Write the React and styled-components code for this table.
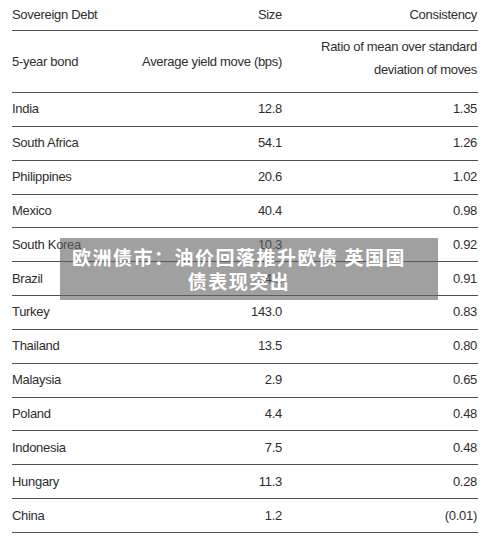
import React from "react";
import styled, { createGlobalStyle } from "styled-components";

const GlobalStyle = createGlobalStyle`
  html, body {
    margin: 0;
    padding: 0;
    background: #fff;
  }
  body {
    font-family: "Liberation Sans", Arial, sans-serif;
    color: #2e2e2e;
  }
`;

const Page = styled.div`
  position: relative;
  width: 500px;
  height: 539px;
  overflow: hidden;
  background: #fff;
`;

const Table = styled.div`
  padding: 0 22px 0 12px;
  display: flex;
  flex-direction: column;
`;

const Row = styled.div`
  display: grid;
  grid-template-columns: 120px 151px 1fr;
  align-items: center;
  box-sizing: border-box;
  height: ${(props) => props.h || "33.85px"};
  border-bottom: 1px solid #505050;
  font-size: 13px;
  letter-spacing: -0.3px;
`;

const Cell = styled.div`
  text-align: ${(props) => (props.right ? "right" : "left")};
  padding-right: ${(props) => (props.right ? "1px" : "0")};
  padding-bottom: ${(props) => props.lift || "0"};
  line-height: ${(props) => props.lh || "16px"};
  white-space: nowrap;
`;

const Banner = styled.div`
  position: absolute;
  left: 60px;
  top: 238px;
  width: 378px;
  height: 62px;
  box-sizing: border-box;
  padding: 7px 20px 0 0;
  background: rgba(96, 96, 96, 0.6);
  color: #fff;
  font-family: "Noto Sans CJK SC", "Noto Sans", sans-serif;
  font-weight: 700;
  font-size: 19px;
  letter-spacing: 1.5px;
  line-height: 24px;
  text-align: center;
`;

const rows = [
  ["India", "12.8", "1.35"],
  ["South Africa", "54.1", "1.26"],
  ["Philippines", "20.6", "1.02"],
  ["Mexico", "40.4", "0.98"],
  ["South Korea", "10.3", "0.92"],
  ["Brazil", "14.1", "0.91"],
  ["Turkey", "143.0", "0.83"],
  ["Thailand", "13.5", "0.80"],
  ["Malaysia", "2.9", "0.65"],
  ["Poland", "4.4", "0.48"],
  ["Indonesia", "7.5", "0.48"],
  ["Hungary", "11.3", "0.28"],
  ["China", "1.2", "(0.01)"],
];

export default function App() {
  return (
    <Page>
      <GlobalStyle />
      <Table>
        <Row h="31px">
          <Cell>Sovereign Debt</Cell>
          <Cell right>Size</Cell>
          <Cell right>Consistency</Cell>
        </Row>
        <Row h="62px">
          <Cell>5-year bond</Cell>
          <Cell right>Average yield move (bps)</Cell>
          <Cell right lh="23px" lift="7px">
            Ratio of mean over standard
            <br />
            deviation of moves
          </Cell>
        </Row>
        {rows.map(([name, size, cons]) => (
          <Row key={name}>
            <Cell>{name}</Cell>
            <Cell right>{size}</Cell>
            <Cell right>{cons}</Cell>
          </Row>
        ))}
      </Table>
      <Banner>
        欧洲债市：油价回落推升欧债 英国国
        <br />
        债表现突出
      </Banner>
    </Page>
  );
}
